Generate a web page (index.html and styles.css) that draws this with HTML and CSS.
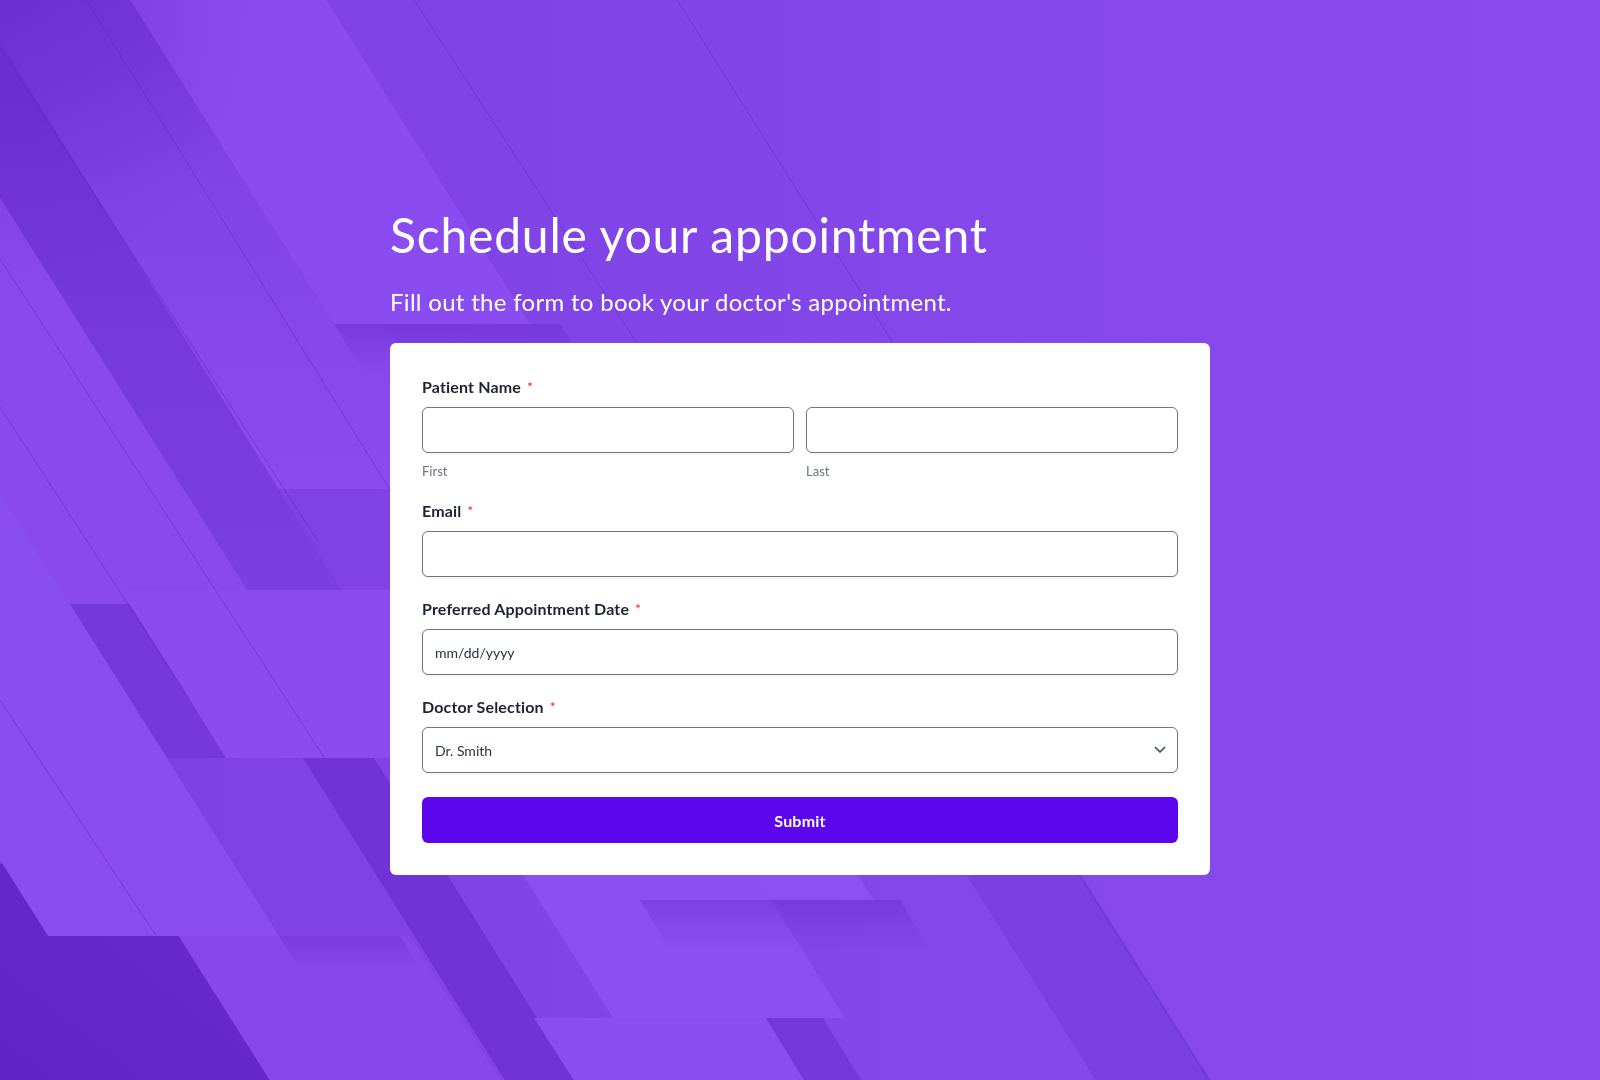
FILE: index.html
```html
<!DOCTYPE html>
<html lang="en">
<head>
<meta charset="utf-8">
<title>Schedule your appointment</title>
<link rel="stylesheet" href="styles.css">
</head>
<body>
<svg class="bg" viewBox="0 0 1600 1080" preserveAspectRatio="none" aria-hidden="true">
  <defs>
    <linearGradient id="base" x1="0" y1="0" x2="1" y2="0">
      <stop offset="0" stop-color="#7b3fe3"/>
      <stop offset="0.45" stop-color="#8246e8"/>
      <stop offset="1" stop-color="#8a4bef"/>
    </linearGradient>
    <linearGradient id="darkBand" x1="0" y1="0" x2="0" y2="1">
      <stop offset="0" stop-color="#6d30d6"/>
      <stop offset="1" stop-color="#7e43e6"/>
    </linearGradient>
    <linearGradient id="topBand" x1="0" y1="0" x2="0" y2="1">
      <stop offset="0" stop-color="#7337db"/>
      <stop offset="0.4" stop-color="#8044e8"/>
      <stop offset="1" stop-color="#8a4bf0"/>
    </linearGradient>
    <linearGradient id="shadeDown" x1="0" y1="0" x2="0" y2="1">
      <stop offset="0" stop-color="#5a1ec4" stop-opacity="0.3"/>
      <stop offset="1" stop-color="#5a1ec4" stop-opacity="0"/>
    </linearGradient>
    <linearGradient id="cornerDark" x1="0" y1="1" x2="1" y2="0">
      <stop offset="0" stop-color="#5f22c6"/>
      <stop offset="1" stop-color="#6a2dd2"/>
    </linearGradient>
    <radialGradient id="cornerShade" cx="0" cy="0" r="1" gradientUnits="objectBoundingBox">
      <stop offset="0" stop-color="#6428cc" stop-opacity="0.55"/>
      <stop offset="1" stop-color="#6428cc" stop-opacity="0"/>
    </radialGradient>
  </defs>
  <rect x="0" y="0" width="1600" height="1080" fill="url(#base)"/>

  <!-- upper-left bands -->
  <polygon points="-32,-10 194,-10 482,489 256,489" fill="url(#topBand)"/>
  <polygon points="-146,-10 -32,-10 447,760 333,760" fill="url(#darkBand)"/>
  <polygon points="124,-10 320,-10 530,324 334,324" fill="#8a4cf0"/>
  <polygon points="-362,-10 -131,-10 256,604 24,604" fill="#8949ef"/>

  <!-- bottom-left dark area -->
  <polygon points="-10,864 133,864 276,1090 -10,1090" fill="url(#cornerDark)"/>

  <!-- light band along bottom left -->
  <polygon points="179,936 410,936 507,1090 276,1090" fill="#8648ec"/>

  <!-- middle-left shards -->
  <polygon points="70,604 130,604 227,758 167,758" fill="#7438dc"/>
  <polygon points="121,590 402,590 508,758 226,758" fill="#8a4cf0"/>
  <polygon points="-548,-10 -317,-10 279,936 48,936" fill="#8a4df1"/>

  <!-- bottom stripes -->
  <polygon points="303,758 374,758 582,1090 511,1090" fill="#6f33d8"/>
  <polygon points="534,1018 766,1018 811,1090 580,1090" fill="#8a4df1"/>
  <polygon points="766,1018 823,1018 867,1090 810,1090" fill="#7438dc"/>
  <polygon points="793,600 908,600 1217,1090 1102,1090" fill="#7b40e3"/>
  <polygon points="416,700 521,700 685,960 580,960" fill="#8a4cf0"/>
  <polygon points="451,600 685,600 874,900 640,900" fill="#8c50f4"/>
  <polygon points="413,700 645,700 845,1018 613,1018" fill="#8b4ff3"/>

  <!-- soft shadows under shards -->
  <polygon points="334,324 560,324 590,372 364,372" fill="url(#shadeDown)"/>
  <polygon points="640,900 900,900 930,950 670,950" fill="url(#shadeDown)"/>
  <polygon points="279,936 400,936 420,970 300,970" fill="url(#shadeDown)"/>

  <!-- soft darkening of the top-left corner -->
  <rect x="0" y="0" width="260" height="300" fill="url(#cornerShade)"/>

  <!-- thin lines -->
  <g stroke="#5f22c6" stroke-opacity="0.45" stroke-width="1" fill="none">
    <line x1="80" y1="-10" x2="390" y2="490"/>
    <line x1="414" y1="0" x2="637" y2="343"/>
    <line x1="0" y1="48" x2="317" y2="540"/>
    <line x1="0" y1="259" x2="324" y2="757"/>
    <line x1="0" y1="407" x2="190" y2="700"/>
    <line x1="0" y1="700" x2="157" y2="937"/>
    <line x1="671" y1="-10" x2="893" y2="343"/>
    <line x1="1076" y1="870" x2="1215" y2="1090"/>
  </g>
</svg>

<main class="page">
  <h1 class="title">Schedule your appointment</h1>
  <p class="subtitle">Fill out the form to book your doctor's appointment.</p>
  <form class="card">
    <div class="field field-name">
      <label class="label">Patient Name<span class="req">*</span></label>
      <div class="name-row">
        <div class="sub">
          <input class="input" type="text" aria-label="First">
          <span class="hint">First</span>
        </div>
        <div class="sub">
          <input class="input" type="text" aria-label="Last">
          <span class="hint">Last</span>
        </div>
      </div>
    </div>
    <div class="field">
      <label class="label">Email<span class="req">*</span></label>
      <input class="input" type="email" aria-label="Email">
    </div>
    <div class="field">
      <label class="label">Preferred Appointment Date<span class="req">*</span></label>
      <input class="input" type="text" placeholder="mm/dd/yyyy" aria-label="Preferred Appointment Date">
    </div>
    <div class="field">
      <label class="label">Doctor Selection<span class="req">*</span></label>
      <div class="select-wrap">
        <select class="input select" aria-label="Doctor Selection">
          <option>Dr. Smith</option>
          <option>Dr. Johnson</option>
          <option>Dr. Lee</option>
        </select>
        <svg class="chevron" width="12" height="8" viewBox="0 0 12 8" aria-hidden="true">
          <path d="M1.5 1.5 L6 6 L10.5 1.5" fill="none" stroke="#454c5a" stroke-width="1.7" stroke-linecap="round" stroke-linejoin="round"/>
        </svg>
      </div>
    </div>
    <button class="submit" type="button">Submit</button>
  </form>
</main>
</body>
</html>
```
FILE: styles.css
```css
* {
  box-sizing: border-box;
}

html, body {
  margin: 0;
  height: 100%;
}

body {
  font-family: Lato, "Noto Sans", "Liberation Sans", sans-serif;
  background: #8246e8;
  overflow: hidden;
  color: #1f2937;
}

.bg {
  position: fixed;
  left: 0;
  top: 0;
  width: 100%;
  height: 100%;
  z-index: 0;
  display: block;
}

.page {
  position: relative;
  z-index: 1;
  width: 820px;
  margin: 0 auto;
  padding-top: 206px;
}

.title {
  margin: 0;
  font-size: 48px;
  line-height: 58px;
  font-weight: 400;
  color: #ffffff;
  letter-spacing: 0.8px;
}

.subtitle {
  margin: 22px 0 0;
  font-size: 24px;
  line-height: 32px;
  font-weight: 400;
  color: #ffffff;
  letter-spacing: 0.3px;
}

.card {
  margin-top: 25px;
  background: #ffffff;
  border-radius: 6px;
  padding: 32px;
  display: flex;
  flex-direction: column;
  gap: 20px;
}

.field {
  display: flex;
  flex-direction: column;
}

.field-name {
  margin-bottom: -2px;
}

.label {
  font-size: 16px;
  line-height: 24px;
  font-weight: 700;
  color: #1c2434;
  margin-bottom: 8px;
  letter-spacing: 0.15px;
}

.req {
  color: #dc3324;
  font-size: 14px;
  font-weight: 400;
  margin-left: 6px;
  vertical-align: 1px;
}

.name-row {
  display: grid;
  grid-template-columns: 1fr 1fr;
  gap: 12px;
}

.sub {
  display: flex;
  flex-direction: column;
}

.input {
  width: 100%;
  height: 46px;
  border: 1px solid #6e7480;
  border-radius: 6px;
  background: #ffffff;
  box-shadow: 0 1px 3px rgba(17, 24, 39, 0.08);
  padding: 0 12px;
  font-family: Lato, "Noto Sans", "Liberation Sans", sans-serif;
  font-size: 14px;
  color: #2a3140;
  outline: none;
  margin: 0;
}

.input::placeholder {
  color: #2a3140;
  opacity: 1;
}

.hint {
  margin-top: 8px;
  font-size: 13px;
  line-height: 20px;
  color: #6b7280;
}

.select-wrap {
  position: relative;
}

.select {
  appearance: none;
  -webkit-appearance: none;
  padding-right: 36px;
}

.chevron {
  position: absolute;
  right: 12px;
  top: 50%;
  transform: translateY(-50%);
  pointer-events: none;
}

.submit {
  margin-top: 4px;
  height: 46px;
  width: 100%;
  border: none;
  border-radius: 6px;
  background: #5c06ee;
  color: #ffffff;
  font-family: Lato, "Noto Sans", "Liberation Sans", sans-serif;
  font-size: 16px;
  font-weight: 700;
  letter-spacing: 0.2px;
  cursor: pointer;
}
```
